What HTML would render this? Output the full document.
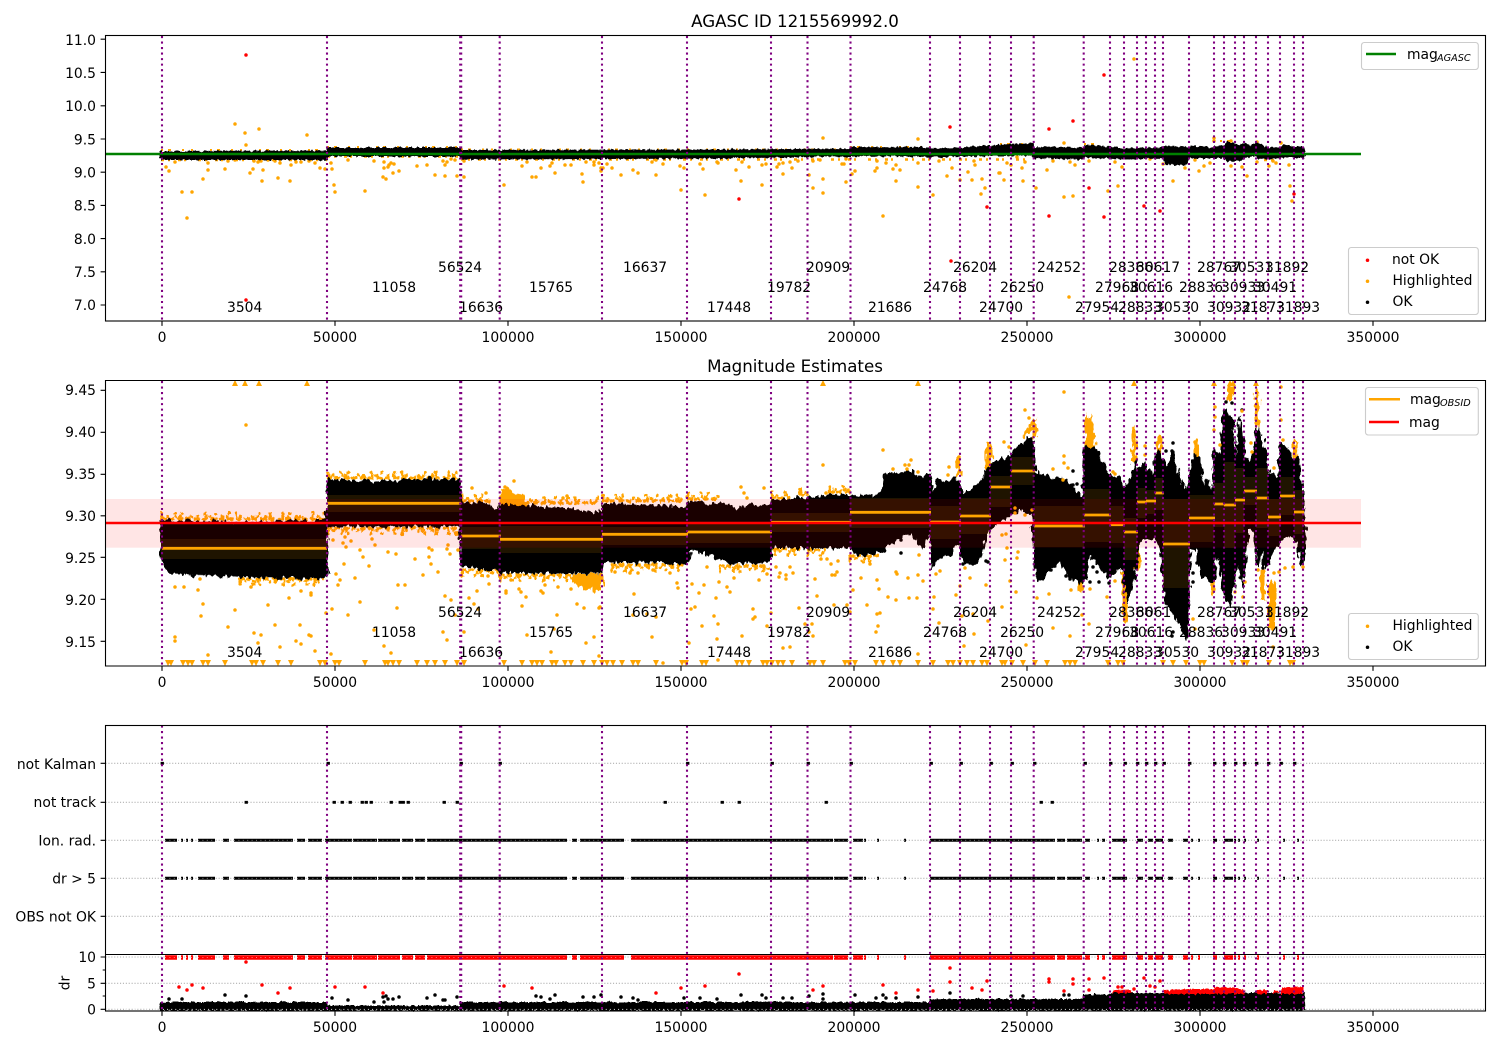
<!DOCTYPE html>
<html><head><meta charset="utf-8"><title>AGASC ID 1215569992.0</title>
<style>
html,body{margin:0;padding:0;background:#fff}
svg{display:block}
text{font-family:"DejaVu Sans",sans-serif;font-size:13.89px;fill:#000}
.m{text-anchor:middle}
.t{font-size:16.67px;text-anchor:middle}
.s{font-size:9.7px;font-style:italic}
.v{fill:none;stroke:#800080;stroke-width:2.08;stroke-dasharray:2.08 3.44}
.o{fill:none;stroke:#ffa500;stroke-width:3.5;stroke-linecap:round}
.r{fill:none;stroke:#f00;stroke-width:3.5;stroke-linecap:round}
.k{fill:none;stroke:#000;stroke-width:3.5;stroke-linecap:round}
.g{fill:none;stroke:#b0b0b0;stroke-width:1.1;stroke-dasharray:1.1 1.8}
.a{fill:none;stroke:#000;stroke-width:1.1}
.leg{fill:#fff;fill-opacity:.8;stroke:#ccc;stroke-width:1.1}
.f1{fill:none;stroke:#ffa500;stroke-width:3.4;stroke-linecap:round;stroke-dasharray:0 3.1 0 4.7 0 2.6 0 6.3}
.f2{fill:none;stroke:#ffa500;stroke-width:3.2;stroke-linecap:round;stroke-dasharray:0 5.3 0 9.1 0 3.7 0 12}
.f3{fill:none;stroke:#ffa500;stroke-width:3.2;stroke-linecap:round;stroke-dasharray:0 13 0 7 0 23 0 11}
</style></head><body>
<svg xmlns="http://www.w3.org/2000/svg" width="1500" height="1050" viewBox="0 0 1500 1050">
<defs>
<filter id="rough" filterUnits="userSpaceOnUse" x="0" y="0" width="1500" height="1050" color-interpolation-filters="sRGB">
<feTurbulence type="fractalNoise" baseFrequency="0.28 0.12" numOctaves="2" seed="4" result="n"/>
<feDisplacementMap in="SourceGraphic" in2="n" scale="9" xChannelSelector="R" yChannelSelector="G"/>
</filter>
<filter id="rough2" filterUnits="userSpaceOnUse" x="0" y="0" width="1500" height="1050" color-interpolation-filters="sRGB">
<feTurbulence type="fractalNoise" baseFrequency="0.35 0.2" numOctaves="2" seed="9" result="n"/>
<feDisplacementMap in="SourceGraphic" in2="n" scale="4" xChannelSelector="R" yChannelSelector="G"/>
</filter>
<path id="vl" d="M162 0V285M327 0V285M460.2 0V285M461.2 0V285M499.7 0V285M602 0V285M687 0V285M771 0V285M807.5 0V285M850.5 0V285M930 0V285M960 0V285M990 0V285M1011 0V285M1033.7 0V285M1083.7 0V285M1110 0V285M1124 0V285M1137 0V285M1146 0V285M1155 0V285M1163 0V285M1189 0V285M1214 0V285M1224 0V285M1235 0V285M1244 0V285M1256 0V285M1268 0V285M1280 0V285M1294 0V285M1303 0V285"/>
<path id="xt" d="M162 0v4.9M335 0v4.9M508 0v4.9M681 0v4.9M854 0v4.9M1027 0v4.9M1200 0v4.9M1373 0v4.9"/>
<g id="xl">
<text x="162" y="0" class="m">0</text><text x="335" y="0" class="m">50000</text><text x="508" y="0" class="m">100000</text><text x="681" y="0" class="m">150000</text><text x="854" y="0" class="m">200000</text><text x="1027" y="0" class="m">250000</text><text x="1200" y="0" class="m">300000</text><text x="1373" y="0" class="m">350000</text>
</g>
<path id="ft" d="M162 519H326M328 478H460M462 501H490M501 503H600M603 501H686M688 499H720M772 498H790M800 495H808M830 492H850"/>
<path id="fb" d="M240 579H325M328 528H460M462 570H500M500 575H570M612 565H686M720 566H770M775 549H800M808 550H825M850 556H880"/>
<path id="seg" d="M165 840.3H177M181 840.3H183M186 840.3H188M191 840.3H193M198 840.3H215M223 840.3H229M234 840.3H293M297 840.3H305M308 840.3H322M325 840.3H352M353 840.3H377M378 840.3H400M402 840.3H413M415 840.3H425M427 840.3H567M572 840.3H577M580 840.3H624M631 840.3H833M834 840.3H848M853 840.3H863M864 840.3H866M877 840.3H879M904 840.3H906M930 840.3H1055M1057 840.3H1065M1067 840.3H1082M1085 840.3H1090M1097 840.3H1099M1102 840.3H1105M1112 840.3H1127M1137 840.3H1143M1148 840.3H1153M1155 840.3H1163M1168 840.3H1173M1183 840.3H1188M1191 840.3H1193M1198 840.3H1200M1213 840.3H1217M1224 840.3H1233M1234 840.3H1236M1238 840.3H1240M1244 840.3H1246M1257 840.3H1259M1283 840.3H1285M1297 840.3H1299"/>
</defs>
<rect width="1500" height="1050" fill="#fff"/>

<!-- ============ PANEL 1 ============ -->
<text x="795" y="27" class="t">AGASC ID 1215569992.0</text>
<path class="o" d="M166 167h0M169 171h0M175 162h0M182 192h0M192 192h0M187 218h0M208 163h0M208 170h0M203 179h0M225 169h0M228 161h0M235 160h0M250 173h0M253 169h0M262 181h0M263 170h0M254 161h0M258 162h0M261 161h0M268 160h0M275 161h0M280 163h0M278 178h0M290 181h0M291 165h0M296 162h0M301 162h0M309 161h0M315 163h0M320 168h0M325 169h0M331 163h0M332 169h0M334 185h0M335 192h0M365 191h0M348 160h0M374 161h0M384 162h0M384 168h0M388 167h0M389 165h0M391 163h0M394 164h0M393 173h0M399 171h0M383 177h0M386 179h0M417 166h0M427 165h0M435 175h0M445 176h0M445 165h0M443 161h0M447 162h0M451 159h0M455 160h0M457 176h0M464 177h0M464 161h0M235 124h0M245 133h0M259 129h0M307 135h0M246 145h0
M504 185h0M532 177h0M536 177h0M522 166h0M527 162h0M541 168h0M550 166h0M552 163h0M555 173h0M565 165h0M571 165h0M582 174h0M583 182h0M586 162h0M594 162h0M594 165h0M599 163h0M601 168h0M601 171h0M603 168h0M607 164h0M612 168h0M621 175h0M633 170h0M638 173h0M656 175h0M652 162h0M656 160h0M663 164h0M680 166h0M684 168h0M681 190h0M705 195h0M700 164h0M703 169h0M717 162h0M718 163h0M736 170h0M741 181h0M742 162h0M749 167h0M762 185h0M762 165h0M766 164h0M777 167h0M779 164h0M783 163h0M783 174h0M790 162h0M792 168h0M798 161h0M809 175h0M813 188h0M823 179h0M823 193h0M823 138h0M813 161h0M820 160h0M842 164h0M844 164h0M846 159h0M852 174h0M855 171h0M846 182h0M875 171h0M877 168h0M877 161h0M886 163h0M893 169h0M896 165h0M900 170h0M896 181h0M918 187h0M918 139h0M918 163h0M933 195h0M939 161h0M947 176h0M952 168h0M960 180h0M968 172h0M972 180h0M974 161h0M975 165h0M982 179h0M985 188h0M981 194h0M883 216h0M999 173h0
M1134 59h0M1064 143h0M1047 170h0M1053 161h0M1036 188h0M1064 197h0M1073 196h0M1069 297h0M1108 191h0M1118 186h0M1173 181h0M1185 168h0M1199 171h0M1204 166h0M1210 163h0M1195 160h0M1231 166h0M1242 167h0M1247 176h0M1289 165h0M1290 186h0M1292 201h0M1214 138h0M1214 141h0M1000 173h0M1004 180h0M1022 168h0M1023 181h0M1025 162h0M1007 163h0M1011 165h0M1017 157h0M1070 162h0M1075 165h0M1089 161h0M1115 162h0M1122 167h0M1150 159h0M1163 164h0M1269 166h0M1273 161h0M1276 163h0M1231 141h0M1257 142h0M1281 143h0M1257 162h0"/>
<path d="M161 150H327M327 147H460M461 149.5H850M850 147H930M1000 144H1034M1084 144H1100M1220 141H1240M1256 143H1262" fill="none" stroke="#ffa500" stroke-width="2" stroke-dasharray="2 5 3 11 2 7 2 17"/>
<path d="M161 160H327M327 156.5H460M461 159.5H1030M1264 160H1280" fill="none" stroke="#ffa500" stroke-width="2.6" stroke-dasharray="3 4 2 8 3 3 2 12"/>
<g filter="url(#rough2)">
<path d="M160 151.5 327 151 327 148 460 148 461 150.5 720 150 850 149 851 147.5 930 148 932 149 960 148 990 146 1010 144.5 1033 144 1035 147 1084 148 1086 145 1110 147 1125 149 1160 148 1164 146 1188 148 1190 146 1212 148 1215 147 1224 146 1227 142 1236 144 1240 146 1244 143 1250 146 1256 143 1262 145 1268 148 1280 148 1284 145 1294 147 1303 147 1305 152 1304 157 1280 157 1270 159 1258 158 1254 155 1244 158 1240 161 1228 161 1224 158 1215 158 1190 158 1186 165 1165 164 1163 158 1125 159 1085 157 1083 159 1034 158 1033 155 960 156 930 157 900 155.5 850 156 720 158 461 159 460 156 328 156 327 159.5 161 159.5Z" fill="#000" stroke="#000" stroke-width="1"/>
</g>
<path d="M105.5 154H1361" fill="none" stroke="#008000" stroke-width="2.5"/>
<path class="r" d="M246 55h0M246 300h0M739 199h0M950 127h0M987 207h0M951 261h0M1049 129h0M1073 121h0M1104 75h0M1089 188h0M1049 216h0M1104 217h0M1144 206h0M1160 211h0M1294 194h0"/>
<use href="#vl" class="v" y="36"/>
<g>
<text x="438" y="272">56524</text><text x="623" y="272">16637</text><text x="806" y="272">20909</text><text x="953" y="272">26204</text><text x="1037" y="272">24252</text><text x="1109" y="272">28366</text><text x="1136" y="272">30617</text><text x="1197" y="272">28767</text><text x="1229" y="272">30531</text><text x="1265" y="272">31892</text>
<text x="372" y="292">11058</text><text x="529" y="292">15765</text><text x="767" y="292">19782</text><text x="923" y="292">24768</text><text x="1000" y="292">26250</text><text x="1095" y="292">27968</text><text x="1129" y="292">30616</text><text x="1179" y="292">28836</text><text x="1221" y="292">30933</text><text x="1253" y="292">30491</text>
<text x="227" y="312">3504</text><text x="459" y="312">16636</text><text x="707" y="312">17448</text><text x="868" y="312">21686</text><text x="979" y="312">24700</text><text x="1075" y="312">27954</text><text x="1118" y="312">28833</text><text x="1155" y="312">30530</text><text x="1207" y="312">30932</text><text x="1241" y="312">31873</text><text x="1276" y="312">31893</text>
</g>
<rect class="a" x="105.5" y="35.5" width="1380" height="285.5"/>
<use href="#xt" class="a" y="321"/>
<use href="#xl" y="342"/>
<path class="a" d="M100.6 39.2h4.9M100.6 72.4h4.9M100.6 105.8h4.9M100.6 139h4.9M100.6 172.2h4.9M100.6 205.4h4.9M100.6 238.6h4.9M100.6 271.8h4.9M100.6 305h4.9"/>
<text x="96" y="45" text-anchor="end">11.0</text><text x="96" y="78" text-anchor="end">10.5</text><text x="96" y="111" text-anchor="end">10.0</text><text x="96" y="144.5" text-anchor="end">9.5</text><text x="96" y="177.5" text-anchor="end">9.0</text><text x="96" y="210.5" text-anchor="end">8.5</text><text x="96" y="244" text-anchor="end">8.0</text><text x="96" y="277" text-anchor="end">7.5</text><text x="96" y="310" text-anchor="end">7.0</text>
<rect class="leg" x="1361.5" y="42.5" width="116.8" height="27" rx="2.8"/>
<path d="M1366 54h30" stroke="#008000" stroke-width="2.5"/>
<text x="1407" y="59">mag</text><text x="1437" y="61" class="s">AGASC</text>
<rect class="leg" x="1348.5" y="247.5" width="129.8" height="67" rx="2.8"/>
<path class="r" d="M1367.5 260.3h0"/><path class="o" d="M1367.5 281.3h0"/><path class="k" d="M1367.5 302.3h0"/>
<text x="1392" y="264">not OK</text><text x="1392.5" y="285">Highlighted</text><text x="1392.5" y="306">OK</text>

<!-- ============ PANEL 2 ============ -->
<text x="795" y="372" class="t">Magnitude Estimates</text>
<!-- fringes -->
<g filter="url(#rough2)">
<use href="#ft" class="f1"/><use href="#ft" class="f2" y="-2.5"/><use href="#ft" class="f3" y="-5.5"/>
<use href="#fb" class="f1"/><use href="#fb" class="f2" y="2.5"/><use href="#fb" class="f3" y="5.5"/>
</g>
<g filter="url(#rough)">
<path d="M500 505 501 490 508 486 515 494 525 497 526 506ZM572 574H603V592L598 589 594 592 590 588 584 590 578 586 572 582Z" fill="#ffa500"/>
<path d="M987 450V467M990 445V465M1024 436 1034 424 1036 436M1134 428V460M1159 438V452M1196 442V455M1257 392V425M1295 442V458M1123 573 1126 620M1138 545V567M1246 530V540M1222 553V570M1213 580V593M1080 583V590M958 458V475" fill="none" stroke="#ffa500" stroke-width="4.2" stroke-linecap="round"/>
<path d="M1263 572V600" fill="none" stroke="#ffa500" stroke-width="5"/>
<path d="M1272 585V627" fill="none" stroke="#ffa500" stroke-width="8" stroke-linecap="round"/>
<path d="M1230 388V398" fill="none" stroke="#ffa500" stroke-width="6" stroke-linecap="round"/>
<path d="M1085 448 1085 425 1087 412 1089 420 1092 412 1094 430 1096 448Z" fill="#ffa500"/>
</g>
<!-- black mass -->
<g filter="url(#rough)">
<path fill="#000" stroke="#000" stroke-width="1.6" stroke-linejoin="round" d="M161 521 190 521 220 521 232 523 260 523 300 521 326 521 327 480 370 482 400 481 430 479 460 480 461 503 490 504 493 510 499 511 500 505 540 507 570 509 600 514 602 504 640 505 687 508 688 502 730 505 735 510 750 506 770 505 771 501 807 498 850 495 870 497 880 493 883 488 886 472 900 474 910 471 923 480 930 472 933 495 937 480 943 483 957 478 962 495 980 483 990 467 993 463 1010 457 1011 452 1034 436 1035 473 1050 477 1055 483 1060 477 1066 480 1070 485 1083 498 1084 448 1095 448 1100 460 1107 470 1112 477 1120 478 1124 488 1128 487 1131 477 1135 462 1139 470 1143 462 1148 470 1153 477 1156 455 1160 452 1165 463 1168 468 1173 452 1177 473 1182 483 1187 493 1191 467 1195 456 1200 457 1204 487 1208 480 1213 493 1214 450 1220 458 1224 410 1230 417 1233 420 1236 468 1240 417 1245 457 1250 462 1255 453 1257 427 1262 437 1267 463 1269 477 1273 473 1278 480 1281 443 1287 447 1292 460 1298 458 1303 490 1305 540 1303 567 1296 540 1290 533 1280 540 1275 547 1272 553 1265 570 1262 547 1258 567 1255 530 1248 530 1243 587 1238 560 1230 607 1224 593 1218 553 1212 583 1203 577 1196 547 1190 550 1187 640 1180 625 1172 612 1165 600 1163 575 1160 543 1150 537 1140 540 1135 573 1127 603 1122 567 1110 577 1100 567 1090 553 1085 580 1080 583 1070 577 1060 562 1050 570 1040 580 1034 570 1033 513 1020 510 1012 515 1000 520 987 533 980 560 973 563 963 563 960 550 957 543 950 553 943 557 937 560 932 567 930 530 923 547 910 533 890 543 885 550 867 555 857 555 850 547 807 548 772 547 770 562 750 563 730 563 690 548 689 563 603 562 602 573 590 573 500 572 499 570 461 566 460 526 400 526 327 526 327 577 250 577 170 573 161 560Z"/>
</g>
<!-- extra dots -->
<path class="k" d="M1090 582h0M1099 582h0M1109 583h0M1093 567h0M1092 558h0M1097 572h0M1115 568h0M1117 565h0M1137 562h0M1193 573h0M1197 563h0M1193 582h0M1173 443h0M1166 451h0M1172 451h0M1263 568h0M1226 402h0M1232 403h0M1242 410h0M1230 600h0M1051 570h0M1066 576h0M1070 579h0M1173 632h0M1172 636h0M1073 471h0M1077 484h0M1073 485h0M901 540h0M901 553h0M963 564h0M970 563h0M975 563h0M986 561h0M988 562h0"/>
<!-- orange dots -->
<path class="o" d="M246 425h0M175 587h0M184 587h0M200 579h0M198 590h0M203 604h0M201 616h0M235 610h0M228 627h0M175 637h0M175 641h0M208 655h0M254 633h0M261 635h0M258 643h0M280 647h0M275 625h0M268 605h0M289 598h0M301 591h0M311 593h0M311 595h0M300 625h0M296 641h0M301 644h0M309 635h0M311 636h0M315 651h0M251 587h0
M333 540h0M343 543h0M351 541h0M345 537h0M346 547h0M360 550h0M363 557h0M372 539h0M375 545h0M388 552h0M396 554h0M369 566h0M344 564h0M336 574h0M340 580h0M338 585h0M355 578h0M360 602h0M332 609h0M326 613h0M348 615h0M398 585h0M405 585h0M397 608h0M415 559h0M423 575h0M429 548h0M432 550h0M429 557h0M431 564h0M438 572h0M447 549h0M450 554h0M448 545h0M445 596h0M451 600h0M455 615h0M443 632h0M447 640h0M384 646h0M391 653h0M374 630h0M331 654h0
M458 550h0M477 591h0M469 598h0M474 604h0M478 609h0M489 584h0M488 576h0M464 632h0M506 591h0M506 593h0M511 580h0M519 589h0M521 592h0M526 597h0M522 606h0M544 580h0M545 585h0M541 591h0M543 593h0M558 587h0M571 589h0M557 615h0M527 635h0M554 629h0M586 643h0M551 652h0M577 604h0M584 608h0M594 637h0M599 608h0M599 656h0M472 488h0M514 481h0M486 493h0M505 487h0M567 496h0M563 498h0
M634 594h0M600 607h0M633 615h0M647 614h0M656 617h0M652 637h0M594 637h0M599 656h0M663 663h0M615 572h0M630 573h0M638 573h0M653 570h0M670 573h0M677 583h0M678 588h0M692 584h0M699 593h0M704 585h0M707 567h0M719 582h0M727 587h0M730 592h0M734 578h0M716 598h0M691 609h0M695 607h0M714 616h0M718 624h0M702 626h0M689 643h0M717 639h0M742 636h0M718 660h0M753 609h0M753 619h0M755 617h0M759 580h0M767 574h0M771 613h0M767 626h0M776 567h0M779 577h0M780 573h0M786 575h0M786 579h0M790 567h0M793 573h0M799 608h0M805 624h0M812 624h0M809 632h0M813 636h0M815 579h0M783 648h0M790 647h0M817 596h0M821 559h0M827 559h0M838 561h0M831 564h0M832 575h0M837 572h0M835 575h0M853 590h0M834 605h0M847 605h0M850 612h0M861 578h0M870 564h0M877 580h0M879 589h0M867 605h0M877 614h0M880 613h0M878 626h0M876 632h0M896 572h0M897 574h0M888 597h0M896 600h0M908 578h0M909 598h0M917 598h0M918 575h0M923 581h0M919 555h0M934 597h0M933 609h0M936 574h0M940 571h0M939 623h0M956 595h0M960 586h0M964 646h0M974 634h0M962 616h0M973 614h0M986 585h0M988 621h0M965 568h0M970 578h0M918 654h0M883 450h0M823 465h0M893 469h0M741 487h0M764 488h0M744 493h0M747 498h0M826 493h0M905 465h0M911 460h0M909 465h0M918 472h0M907 469h0M949 467h0M959 457h0M948 475h0M1004 442h0M1009 447h0
M1064 392h0M1025 410h0M1029 418h0M1004 442h0M1064 456h0M1064 463h0M1068 468h0M1053 469h0M1063 480h0M1113 472h0M1115 474h0M1145 446h0M1145 455h0M1195 442h0M1197 452h0M1215 407h0M1215 417h0M1214 430h0M1220 445h0M1242 411h0M1251 443h0M1252 452h0M1281 387h0M1281 420h0M1283 440h0M1274 468h0M1274 573h0M1273 647h0M1285 568h0M1279 572h0M1303 567h0M1293 567h0M1258 570h0M1243 597h0M1235 592h0M1245 582h0M1090 589h0M1071 590h0M1089 624h0M1107 597h0M1115 581h0M1053 628h0M1070 636h0M1049 594h0M1037 598h0M1082 615h0M1026 645h0M1016 592h0M1010 581h0M1002 607h0M1005 560h0M1007 548h0M1017 558h0M1018 552h0M1195 629h0M1193 619h0M1015 513h0M1015 508h0M1025 515h0M1032 510h0M1006 534h0M1002 535h0"/>
<!-- triangles -->
<path fill="#ffa500" d="M165 660h6l-3 6zM168 660h6l-3 6zM180 660h6l-3 6zM185 660h6l-3 6zM189 660h6l-3 6zM200 660h6l-3 6zM205 660h6l-3 6zM222 660h6l-3 6zM249 660h6l-3 6zM253 660h6l-3 6zM260 660h6l-3 6zM275 660h6l-3 6zM288 660h6l-3 6zM317 660h6l-3 6zM322 660h6l-3 6zM332 660h6l-3 6zM336 660h6l-3 6zM362 660h6l-3 6zM382 660h6l-3 6zM385 660h6l-3 6zM390 660h6l-3 6zM396 660h6l-3 6zM414 660h6l-3 6zM424 660h6l-3 6zM432 660h6l-3 6zM442 660h6l-3 6zM454 660h6l-3 6zM461 660h6l-3 6zM501 660h6l-3 6zM519 660h6l-3 6zM529 660h6l-3 6zM534 660h6l-3 6zM539 660h6l-3 6zM549 660h6l-3 6zM553 660h6l-3 6zM562 660h6l-3 6zM568 660h6l-3 6zM580 660h6l-3 6zM591 660h6l-3 6zM599 660h6l-3 6zM604 660h6l-3 6zM610 660h6l-3 6zM619 660h6l-3 6zM630 660h6l-3 6zM635 660h6l-3 6zM653 660h6l-3 6zM679 660h6l-3 6zM683 660h6l-3 6zM699 660h6l-3 6zM703 660h6l-3 6zM734 660h6l-3 6zM739 660h6l-3 6zM746 660h6l-3 6zM760 660h6l-3 6zM764 660h6l-3 6zM769 660h6l-3 6zM775 660h6l-3 6zM780 660h6l-3 6zM789 660h6l-3 6zM807 660h6l-3 6zM811 660h6l-3 6zM820 660h6l-3 6zM842 660h6l-3 6zM846 660h6l-3 6zM852 660h6l-3 6zM873 660h6l-3 6zM880 660h6l-3 6zM890 660h6l-3 6zM897 660h6l-3 6zM915 660h6l-3 6zM930 660h6l-3 6zM945 660h6l-3 6zM950 660h6l-3 6zM957 660h6l-3 6zM964 660h6l-3 6zM970 660h6l-3 6zM979 660h6l-3 6zM984 660h6l-3 6zM999 660h6l-3 6zM1002 660h6l-3 6zM1009 660h6l-3 6zM1020 660h6l-3 6zM1032 660h6l-3 6zM1044 660h6l-3 6zM1062 660h6l-3 6zM1067 660h6l-3 6zM1072 660h6l-3 6zM1105 660h6l-3 6zM1115 660h6l-3 6zM1120 660h6l-3 6zM1160 660h6l-3 6zM1170 660h6l-3 6zM1183 660h6l-3 6zM1197 660h6l-3 6zM1201 660h6l-3 6zM1229 660h6l-3 6zM1240 660h6l-3 6zM1244 660h6l-3 6zM1266 660h6l-3 6zM1287 660h6l-3 6zM1290 660h6l-3 6z
M232 386h6l-3 -6zM242 386h6l-3 -6zM256 386h6l-3 -6zM304 386h6l-3 -6zM820 386h6l-3 -6zM915 386h6l-3 -6zM1131 386h6l-3 -6zM1211 386h6l-3 -6zM1227 386h6l-3 -6zM1230 386h6l-3 -6zM1253 386h6l-3 -6z"/>
<!-- error bands -->
<path fill="#ffa500" fill-opacity=".12" d="M161 539H327V559H161ZM327 495H461V512H327ZM461 527H500V549H461ZM500 526H602V553H500ZM602 527H687V545H602ZM687 523H771V543H687ZM771 513H850V532H771ZM850 498H930V528H850ZM930 506H960V539H930ZM960 498H990V534H960ZM990 476H1011V507H990ZM1011 457H1034V485H1011ZM1034 506H1084V547H1034ZM1084 489H1110V542H1084ZM1110 506H1124V543H1110ZM1124 518H1137V560H1124ZM1137 488H1146V518H1137ZM1146 490H1155V514H1146ZM1155 478H1163V510H1155ZM1163 499H1189V588H1163ZM1189 495H1214V542H1189ZM1214 483H1224V527H1214ZM1224 462H1235V548H1224ZM1235 468H1244V533H1235ZM1244 477H1256V505H1244ZM1256 468H1268V528H1256ZM1268 499H1280V536H1268ZM1280 477H1294V515H1280ZM1294 490H1303V534H1294Z"/>
<rect x="105.5" y="499" width="1255.5" height="48.7" fill="#f00" fill-opacity=".1"/>
<path fill="none" stroke="#ffa500" stroke-width="2.8" d="M162 548.3H327M327 503.3H461M461 536H501M500 539.3H603M602 534.3H688M687 532H772M771 522.3H808M807 522.3H851M850 512.3H931M930 522H961M960 516H991M990 487H1012M1011 471H1035M1034 526H1085M1084 515H1111M1110 524.7H1125M1124 532H1138M1137 502H1147M1146 501H1156M1155 493H1164M1163 544H1190M1189 518H1215M1214 504H1225M1224 505H1236M1235 500H1245M1244 491H1257M1256 498H1269M1268 517H1281M1280 496H1295M1294 512H1304"/>
<path d="M105.5 523H1361" stroke="#f00" stroke-width="2.5"/>
<use href="#vl" class="v" y="381"/>
<g>
<text x="438" y="617">56524</text><text x="623" y="617">16637</text><text x="806" y="617">20909</text><text x="953" y="617">26204</text><text x="1037" y="617">24252</text><text x="1109" y="617">28366</text><text x="1136" y="617">30617</text><text x="1197" y="617">28767</text><text x="1229" y="617">30531</text><text x="1265" y="617">31892</text>
<text x="372" y="637">11058</text><text x="529" y="637">15765</text><text x="767" y="637">19782</text><text x="923" y="637">24768</text><text x="1000" y="637">26250</text><text x="1095" y="637">27968</text><text x="1129" y="637">30616</text><text x="1179" y="637">28836</text><text x="1221" y="637">30933</text><text x="1253" y="637">30491</text>
<text x="227" y="657">3504</text><text x="459" y="657">16636</text><text x="707" y="657">17448</text><text x="868" y="657">21686</text><text x="979" y="657">24700</text><text x="1075" y="657">27954</text><text x="1118" y="657">28833</text><text x="1155" y="657">30530</text><text x="1207" y="657">30932</text><text x="1241" y="657">31873</text><text x="1276" y="657">31893</text>
</g>
<path d="M105.5 380.5H1485.5V666H105.5Z" class="a"/>
<use href="#xt" class="a" y="666"/>
<use href="#xl" y="687"/>
<path class="a" d="M100.6 390.3h4.9M100.6 432.3h4.9M100.6 474.3h4.9M100.6 515.8h4.9M100.6 557.3h4.9M100.6 599.3h4.9M100.6 641.3h4.9"/>
<text x="96" y="395" text-anchor="end">9.45</text><text x="96" y="437" text-anchor="end">9.40</text><text x="96" y="479" text-anchor="end">9.35</text><text x="96" y="521" text-anchor="end">9.30</text><text x="96" y="563" text-anchor="end">9.25</text><text x="96" y="605" text-anchor="end">9.20</text><text x="96" y="647" text-anchor="end">9.15</text>
<rect class="leg" x="1365.5" y="387.5" width="112.8" height="47.5" rx="2.8"/>
<path d="M1369 399.3h31" stroke="#ffa500" stroke-width="2.5"/><path d="M1369 422h30" stroke="#f00" stroke-width="2.5"/>
<text x="1410" y="404">mag</text><text x="1440" y="406" class="s">OBSID</text><text x="1409" y="427">mag</text>
<rect class="leg" x="1348.5" y="613.5" width="129.8" height="46" rx="2.8"/>
<path class="o" d="M1367.5 626.3h0"/><path class="k" d="M1367.5 647.3h0"/>
<text x="1392.5" y="630">Highlighted</text><text x="1392.5" y="651">OK</text>

<!-- ============ PANEL 3 ============ -->
<path class="g" d="M105.5 763.3H1485.5M105.5 802.3H1485.5M105.5 840.3H1485.5M105.5 878.3H1485.5M105.5 916.3H1485.5M105.5 957H1485.5M105.5 983.3H1485.5M105.5 1009.3H1485.5"/>
<g fill="none" stroke="#000" stroke-width="3">
<use href="#seg"/><use href="#seg" y="38"/>
</g>
<g fill="none" stroke="#fff" stroke-opacity=".55" stroke-width=".9" stroke-dasharray="1 3.4">
<use href="#seg"/><use href="#seg" y="38"/>
</g>
<g fill="none" stroke="#f00" stroke-width="4.6">
<use href="#seg" y="117.2"/>
</g>
<g fill="none" stroke="#fff" stroke-opacity=".5" stroke-width=".9" stroke-dasharray="1 3.4">
<use href="#seg" y="117.2"/>
</g>
<g filter="url(#rough2)">
<path d="M160 1010V1002.5H327V1006H460V1002.5H930V999.5H1083V1000L1084 995H1110L1111 993.5H1304L1305 1010Z" fill="#000" stroke="#000" stroke-width="1"/>
<path fill="#f00" d="M1112 993 1114 990 1130 989.5 1132 993ZM1164 994V990L1189 989 1214 989V987L1235 987.5 1245 990V994ZM1256 994V990H1268V994ZM1272 994 1274 990 1280 992ZM1281 994V987.5L1290 987 1303 986.5V994Z"/>
</g>
<path d="M105.5 1009.4H1310" fill="none" stroke="#fff" stroke-width="1.1" stroke-opacity=".75" stroke-dasharray="1.1 3"/>
<path class="r" d="M179 987h0M187 990h0M192 985h0M203 988h0M246 962h0M262 985h0M278 993h0M290 988h0M335 987h0M365 987h0M383 993h0M504 986h0M532 988h0M656 993h0M681 988h0M705 986h0M739 974h0M813 990h0M823 986h0M883 985h0M896 993h0M918 990h0M933 991h0M950 968h0M950 982h0M972 988h0M982 990h0M987 981h0M1049 979h0M1049 982h0M1073 979h0M1073 984h0M1089 979h0M1089 990h0M1064 991h0M1104 978h0M1118 987h0M1122 987h0M1134 989h0M1144 978h0M1150 986h0M1155 987h0M1160 981h0"/>
<path class="k" d="M169 999h0M182 999h0M225 995h0M246 996h0M332 998h0M348 1000h0M374 1002h0M384 1002h0M386 996h0M383 997h0M388 999h0M393 999h0M399 997h0M427 998h0M435 995h0M443 1000h0M445 1000h0M457 997h0M536 996h0M541 997h0M555 995h0M550 999h0M583 997h0M594 997h0M601 995h0M621 997h0M633 998h0M638 1000h0M684 998h0M700 998h0M717 999h0M741 995h0M762 995h0M766 998h0M783 998h0M792 998h0M809 996h0M823 994h0M823 999h0M855 995h0M876 998h0M883 995h0M886 998h0M896 998h0M918 997h0M950 993h0M1011 996h0M1023 996h0M1064 995h0M1069 995h0"/>
<path fill="none" stroke="#000" stroke-width="2.8" stroke-linecap="square" d="M162 763.3h.5M328 763.3h.5M461 763.3h.5M500 763.3h.5M687.5 763.3h.5M772 763.3h.5M808 763.3h.5M851 763.3h.5M931 763.3h.5M961 763.3h.5M991 763.3h.5M1012 763.3h.5M1034.5 763.3h.5M1085 763.3h.5M1110.5 763.3h.5M1125 763.3h.5M1137.5 763.3h.5M1146.5 763.3h.5M1155.5 763.3h.5M1164 763.3h.5M1189.5 763.3h.5M1214.5 763.3h.5M1224.5 763.3h.5M1235.5 763.3h.5M1244.5 763.3h.5M1256.5 763.3h.5M1268.5 763.3h.5M1281 763.3h.5M1294.5 763.3h.5M246 802.3h.5M334 802.3h.5M342 802.3h.5M350 802.3h.5M362 802.3h.5M366 802.3h.5M371 802.3h.5M391 802.3h.5M400 802.3h.5M403 802.3h.5M408 802.3h.5M444 802.3h.5M457 802.3h.5M665 802.3h.5M722 802.3h.5M739 802.3h.5M826 802.3h.5M1041 802.3h.5M1052 802.3h.5"/>
<path d="M105.5 954.5H1485.5" class="a"/>
<path class="v" d="M162 725.5V1011M327 725.5V1011M460.2 725.5V1011M461.2 725.5V1011M499.7 725.5V1011M602 725.5V1011M687 725.5V1011M771 725.5V1011M807.5 725.5V1011M850.5 725.5V1011M930 725.5V1011M960 725.5V1011M990 725.5V1011M1011 725.5V1011M1033.7 725.5V1011M1083.7 725.5V1011M1110 725.5V1011M1124 725.5V1011M1137 725.5V1011M1146 725.5V1011M1155 725.5V1011M1163 725.5V1011M1189 725.5V1011M1214 725.5V1011M1224 725.5V1011M1235 725.5V1011M1244 725.5V1011M1256 725.5V1011M1268 725.5V1011M1280 725.5V1011M1294 725.5V1011M1303 725.5V1011"/>
<rect class="a" x="105.5" y="725.5" width="1380" height="285.5"/>
<use href="#xt" class="a" y="1011"/>
<use href="#xl" y="1032"/>
<path class="a" d="M100.6 763.3h4.9M100.6 802.3h4.9M100.6 840.3h4.9M100.6 878.3h4.9M100.6 916.3h4.9M100.6 957h4.9M100.6 983.3h4.9M100.6 1009.3h4.9M102.7 970h2.8M102.7 996h2.8"/>
<text x="96" y="769" text-anchor="end">not Kalman</text><text x="96" y="807" text-anchor="end">not track</text><text x="96" y="845.5" text-anchor="end">Ion. rad.</text><text x="96" y="883.5" text-anchor="end">dr &gt; 5</text><text x="96" y="921.5" text-anchor="end">OBS not OK</text>
<text x="96" y="962" text-anchor="end">10</text><text x="96" y="988.5" text-anchor="end">5</text><text x="96" y="1014.5" text-anchor="end">0</text>
<text transform="translate(69.5 983) rotate(-90)" class="m">dr</text>
</svg>
</body></html>
